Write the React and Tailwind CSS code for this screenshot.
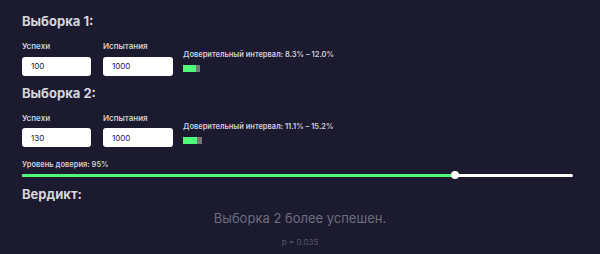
import React, { useState } from "react";

const Sample = ({ title, successes, trials, low, high, barW, greenW }) => {
  return (
    <div>
      <h2 className="text-[13px] font-bold leading-4 text-[#d6d6de]">{title}</h2>
      <div className="mt-[12px] flex items-start">
        <div className="w-[69px]">
          <p className="text-[8px] font-semibold leading-[10px] text-[#cfcfd8]">Успехи</p>
          <input
            defaultValue={successes}
            className="mt-[4px] h-[19px] w-[69px] rounded-[3px] bg-white pl-[9px] text-[8px] text-[#222] outline-none"
          />
        </div>
        <div className="ml-[12px] w-[70px]">
          <p className="text-[8px] font-semibold leading-[10px] text-[#cfcfd8]">Испытания</p>
          <input
            defaultValue={trials}
            className="mt-[4px] h-[19px] w-[70px] rounded-[3px] bg-white pl-[9px] text-[8px] text-[#222] outline-none"
          />
        </div>
        <div className="ml-[10px] pt-[9px]">
          <p className="text-[7.5px] font-semibold leading-[10px] text-[#cfcfd8]">
            Доверительный интервал: {low}% – {high}%
          </p>
          <div className="mt-[5px] flex h-[7px] bg-[#777]" style={{ width: barW }}>
            <div className="h-full bg-[#50fa7b]" style={{ width: greenW }} />
          </div>
        </div>
      </div>
    </div>
  );
};

const App = () => {
  const [level] = useState(95);
  return (
    <div className="min-h-screen bg-[#1c1a2e] px-[22px] pt-[13px] font-['Inter',sans-serif]">
      <Sample title="Выборка 1:" successes="100" trials="1000" low="8.3" high="12.0" barW={17} greenW={13} />
      <div className="mt-[9px]">
        <Sample title="Выборка 2:" successes="130" trials="1000" low="11.1" high="15.2" barW={19} greenW={14} />
      </div>

      <p className="mt-[13px] text-[7.5px] font-semibold leading-[10px] text-[#cfcfd8]">
        Уровень доверия: {level}%
      </p>
      <div className="relative mt-[1px] h-[8px] w-[551px]">
        <div className="absolute left-0 right-0 top-[2.5px] flex h-[3px] rounded-full bg-white">
          <div className="h-full w-[433px] rounded-l-full bg-[#50fa7b]" />
        </div>
        <div className="absolute left-[429px] top-0 h-[8px] w-[8px] rounded-full bg-white" />
      </div>

      <h2 className="mt-[7px] text-[13px] font-bold leading-4 text-[#d6d6de]">Вердикт:</h2>
      <div className="flex flex-col items-center">
        <p className="mt-[8px] text-[13px] leading-4 text-[#6d6d80]">Выборка 2 более успешен.</p>
        <p className="mt-[11px] text-[8px] leading-[10px] text-[#55556a]">p = 0.035</p>
      </div>
    </div>
  );
};

export default App;
